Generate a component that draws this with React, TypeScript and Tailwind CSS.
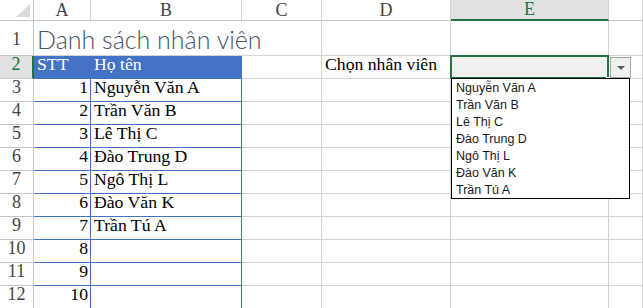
import React from 'react';

const cols = ['A', 'B', 'C', 'D', 'E', ''];

const employees = [
  'Nguyễn Văn A',
  'Trần Văn B',
  'Lê Thị C',
  'Đào Trung D',
  'Ngô Thị L',
  'Đào Văn K',
  'Trần Tú A',
];

const serif = "font-['Liberation_Serif','Times_New_Roman',serif]";
const grid = 'border-r border-b border-[#d4d4d4]';

const App: React.FC = () => {
  // rows 3..12 of the table
  const tableRows = Array.from({ length: 10 }, (_, i) => ({
    stt: i + 1,
    name: employees[i] || '',
  }));

  return (
    <div className="relative w-[643px] h-[308px] overflow-hidden bg-white">
      <div className="grid grid-cols-[34px_57px_151px_80px_129px_158px_1fr] grid-rows-[21px_35px_repeat(11,23px)]">
        {/* Column headers */}
        <div className="border-r border-b border-[#c6c6c6] relative">
          <svg className="absolute right-[3px] bottom-[3px]" width="14" height="13" viewBox="0 0 14 13">
            <polygon points="14,0 14,13 0,13" fill="#dadada" />
          </svg>
        </div>
        {cols.map((c, i) => (
          <div
            key={i}
            className={`${serif} text-[18px] flex items-center justify-center border-r border-[#d4d4d4] ${
              c === 'E'
                ? 'bg-[#e1e1e1] text-[#217346] border-b-2 border-b-[#217346]'
                : 'text-[#444] border-b border-b-[#c6c6c6]'
            }`}
          >
            {c}
          </div>
        ))}

        {/* Row 1 */}
        <div className={`${serif} text-[18px] text-[#444] flex items-end justify-center pb-[2px] border-r border-b border-[#c6c6c6]`}>1</div>
        <div className="col-span-3 border-r border-b border-[#d4d4d4] flex items-end pl-[3px] pb-[1px] overflow-visible">
          <span className="font-['Lato','Open_Sans',sans-serif] font-light text-[25px] leading-[30px] text-[#44546a] whitespace-nowrap">
            Danh sách nhân viên
          </span>
        </div>
        <div className={grid}></div>
        <div className={grid}></div>
        <div className={grid}></div>

        {/* Row 2 */}
        <div className={`${serif} text-[18px] text-[#217346] bg-[#e1e1e1] flex items-end justify-center border-b border-[#c6c6c6] border-r-2 border-r-[#217346]`}>2</div>
        <div className={`${serif} text-[17.7px] text-white bg-[#4472c4] flex items-end pl-[3px] border-b border-b-[#4472c4]`}>STT</div>
        <div className={`${serif} text-[17.7px] text-white bg-[#4472c4] flex items-end pl-[3px] border-r border-r-[#4472c4] border-b border-b-[#4472c4]`}>Họ tên</div>
        <div className={grid}></div>
        <div className={`${serif} text-[17.7px] text-black flex items-end pl-[3px] ${grid}`}>Chọn nhân viên</div>
        <div className="relative bg-[#f0f0f0]">
          <div className="absolute -left-[1px] -top-[1px] w-[159px] h-[24px] border-2 border-[#217346]"></div>
          <div className="absolute right-[-2px] bottom-[-3px] w-[5px] h-[5px] bg-[#217346] border border-white"></div>
          <div className="absolute left-[159px] top-[1px] w-[21px] h-[21px] bg-[#f0f0f0] border border-[#a6a6a6] flex items-center justify-center">
            <svg width="8" height="4" viewBox="0 0 8 4">
              <polygon points="0,0 8,0 4,4" fill="#5a5a5a" />
            </svg>
          </div>
        </div>
        <div className={grid}></div>

        {/* Rows 3..12 */}
        {tableRows.map((r, i) => (
          <React.Fragment key={r.stt}>
            <div className={`${serif} text-[18px] text-[#444] flex items-end justify-center border-r border-b border-[#c6c6c6]`}>
              {i + 3}
            </div>
            <div className={`${serif} text-[17.7px] text-black flex items-end justify-end pr-[2px] border-r border-r-[#4472c4] border-b border-b-[#4472c4]`}>
              {r.stt}
            </div>
            <div className={`${serif} text-[17.7px] text-black flex items-end pl-[3px] border-r border-r-[#4472c4] border-b border-b-[#4472c4]`}>
              {r.name}
            </div>
            <div className={grid}></div>
            <div className={grid}></div>
            <div className={grid}></div>
            <div className={grid}></div>
          </React.Fragment>
        ))}
      </div>

      {/* Data validation dropdown list */}
      <div className="absolute left-[451px] top-[78px] w-[179px] h-[121px] bg-white border border-black pt-[1px] font-['Liberation_Sans',Arial,sans-serif] text-[12.5px] text-[#1a1a1a]">
        {employees.map(e => (
          <div key={e} className="h-[17px] leading-[17px] pl-[4px]">
            {e}
          </div>
        ))}
      </div>
    </div>
  );
};

export default App;
